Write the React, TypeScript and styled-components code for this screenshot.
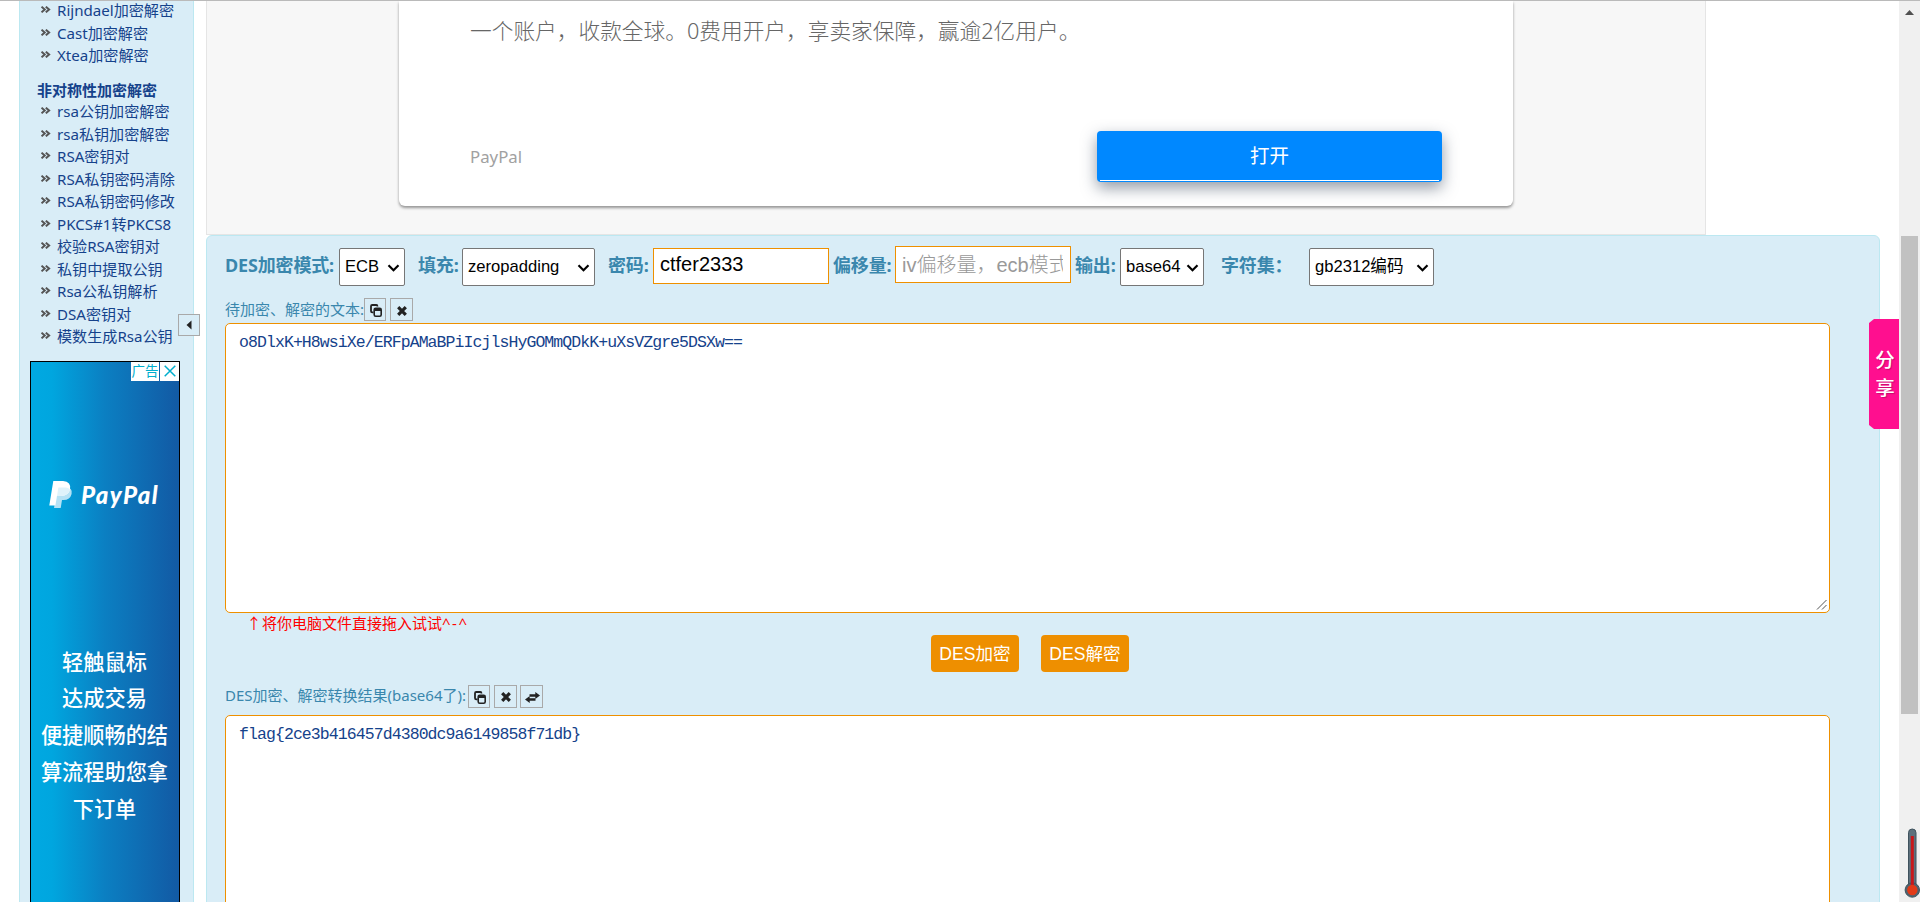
import React from 'react';
import styled, { createGlobalStyle } from 'styled-components';

const GlobalStyle = createGlobalStyle`
  * {
    box-sizing: border-box;
  }

  body {
    margin: 0;
    overflow: hidden;
    background: #fff;
    font-family: 'Noto Sans', 'Noto Sans CJK SC', sans-serif;
    font-size: 15px;
  }
`;

const Page = styled.div`
  position: relative;
  display: flex;
  width: 1920px;
  height: 902px;
  overflow: hidden;
  border-top: 1px solid #bababa;
`;

const Sidebar = styled.aside`
  width: 175px;
  height: 901px;
  margin-left: 19px;
  padding-left: 10px;
  flex-shrink: 0;
  background: #d9edf7;
  border: 1px solid #bce8f1;
  border-width: 0 1px;
`;

const MenuList = styled.ul`
  list-style: none;
  margin: -2px 0 0;
  padding: 0;
`;

const MenuItem = styled.li`
  display: flex;
  align-items: center;
  height: 22.5px;
  padding-left: 11px;
  white-space: nowrap;

  svg {
    flex-shrink: 0;
    margin: -1px 6px 0 0;
  }
`;

const MenuLink = styled.a`
  color: #15428b;
  font-size: 15.1px;
  line-height: 22px;
`;

const MenuTitle = styled.div`
  height: 22.5px;
  margin-top: 12px;
  padding-left: 7px;
  color: #15428b;
  font-weight: bold;
  line-height: 22px;

  & + ${MenuList} {
    margin-top: -1px;
  }
`;

const SideAd = styled.div`
  width: 150px;
  height: 600px;
  margin-top: 13px;
  border: 1px solid #000;
  background: linear-gradient(90deg, #00a9e2 0%, #00a6df 14%, #0b7fc2 50%, #125ba5 98%);
  color: #fff;
`;

const AdMarks = styled.div`
  display: flex;
  justify-content: flex-end;
  gap: 1px;
  height: 19px;
`;

const AdMark = styled.span<{ $width: number }>`
  display: flex;
  align-items: center;
  justify-content: center;
  width: ${(props) => props.$width}px;
  background: #fff;
  color: #00aecd;
  font-size: 13.5px;
  line-height: 19px;
`;

const SideLogo = styled.div`
  display: flex;
  align-items: center;
  height: 30px;
  margin-top: 99px;
  padding-left: 18px;
`;

const SideLogoText = styled.span`
  margin-left: 8px;
  font-family: Lato, sans-serif;
  font-size: 24px;
  font-style: italic;
  font-weight: 900;
  letter-spacing: 1.4px;
  line-height: 30px;
`;

const SideSlogan = styled.div`
  margin-top: 134px;
  margin-left: -1px;
  font-size: 21.2px;
  font-weight: 500;
  line-height: 36.8px;
  text-align: center;
`;

const Main = styled.main`
  width: 1674px;
  margin-left: 12px;
  flex-shrink: 0;
`;

const AdFrame = styled.div`
  width: 1500px;
  height: 234px;
  padding-left: 192px;
  background: #f7f7f7;
  border: 1px solid #e5e5e5;
  border-top: 0;
`;

const AdCard = styled.div`
  width: 1114px;
  height: 205px;
  padding: 14px 71px 0 71px;
  background: #fff;
  border-radius: 0 0 6px 6px;
  box-shadow: 0 2px 3px rgba(0, 0, 0, 0.4);
`;

const AdText = styled.div`
  height: 116px;
  color: #666;
  font-size: 21.7px;
  font-weight: 300;
  line-height: 31px;
`;

const AdFooter = styled.div`
  display: flex;
  align-items: center;
  justify-content: space-between;
`;

const AdBrand = styled.span`
  color: #a1a1a1;
  font-size: 16.8px;
`;

const OpenButton = styled.button`
  display: flex;
  flex-direction: column;
  justify-content: space-between;
  width: 345px;
  height: 51px;
  padding: 0 0 1px;
  border: 0;
  border-radius: 4px;
  background: #0088ff;
  box-shadow: 0 6px 15px rgba(40, 55, 80, 0.5);
  color: #fff;
  font-family: inherit;
  font-size: 19.5px;
  line-height: 49px;

  &::after {
    content: '';
    align-self: stretch;
    height: 1px;
    margin: 0 3px;
    background: #fff;
  }

  span {
    align-self: center;
    height: 49px;
  }
`;

const Panel = styled.section`
  height: 680px;
  padding: 0 49px 0 18px;
  background: #d9edf7;
  border: 1px solid #bce8f1;
  border-radius: 6px;
`;

const Controls = styled.div`
  display: flex;
  height: 62px;
  padding-top: 12px;
`;

const Label = styled.label<{ $width: number; $gap?: number }>`
  width: ${(props) => props.$width}px;
  margin-left: ${(props) => props.$gap || 0}px;
  flex-shrink: 0;
  color: #3a87ad;
  font-size: 18px;
  font-weight: bold;
  line-height: 34px;
  white-space: nowrap;
  letter-spacing: -0.15px;
`;

const SelectBox = styled.span<{ $width: number }>`
  display: grid;
  align-items: center;
  width: ${(props) => props.$width}px;
  height: 38px;
  flex-shrink: 0;

  & > * {
    grid-area: 1 / 1;
  }

  svg {
    justify-self: end;
    margin: 2px 5px 0 0;
    pointer-events: none;
  }
`;

const NativeSelect = styled.select`
  width: 100%;
  height: 38px;
  padding: 0 0 2px 5px;
  appearance: none;
  border: 1px solid #767676;
  border-radius: 2px;
  background: #fff;
  color: #000;
  font-family: 'Liberation Sans', 'Noto Sans CJK SC', sans-serif;
  font-size: 16.6px;
`;

const TextInput = styled.input<{ $raised?: boolean }>`
  width: 176px;
  height: ${(props) => (props.$raised ? 37 : 36)}px;
  margin-top: ${(props) => (props.$raised ? -2 : 0)}px;
  padding: ${(props) => (props.$raised ? '1px 7px 0 6px' : '0 7px 3px 6px')};
  flex-shrink: 0;
  border: 1px solid #ee9000;
  outline: 0;
  background: #fff;
  color: #000;
  font-family: 'Liberation Sans', 'Noto Sans CJK SC', sans-serif;
  font-size: 20px;

  &::placeholder {
    color: #999;
    font-weight: 300;
  }
`;

const FieldHead = styled.div<{ $width: number }>`
  display: flex;
  align-items: center;
  gap: 4px;
  height: 23px;
  color: #3a87ad;

  span {
    width: ${(props) => props.$width}px;
    margin-right: -4px;
    line-height: 20px;
    margin-top: -2px;
    white-space: nowrap;
  }
`;

const IconButton = styled.button`
  display: flex;
  align-items: center;
  justify-content: center;
  width: 22px;
  height: 23px;
  padding: 2px 0 0 1px;
  border: 1px solid #a9a9a9;
  background: #d9edf7;

  & + & {
    width: 23px;
    margin-right: -1px;
  }
`;

const TextArea = styled.textarea<{ $gap: number }>`
  display: block;
  width: 1605px;
  height: 290px;
  margin-top: ${(props) => props.$gap}px;
  padding: 8px 13px;
  border: 1px solid #ee9000;
  border-radius: 5px;
  outline: 0;
  background: #fff;
  color: #15428b;
  font-family: 'Liberation Mono', monospace;
  font-size: 16.5px;
  letter-spacing: -0.92px;
  line-height: 22px;

  &::-webkit-resizer {
    background: url("data:image/svg+xml,%3Csvg xmlns='http://www.w3.org/2000/svg' width='15' height='15' stroke='%23555'%3E%3Cpath d='M3 12.5L12.5 3M8 12.5L12.5 8'/%3E%3C/svg%3E")
      no-repeat right bottom;
  }
`;

const Hint = styled.div`
  height: 22px;
  padding-left: 21px;
  color: #f00;
  line-height: 21px;

  i {
    display: inline-block;
    width: 16px;
    font-style: normal;
    text-align: center;
  }

  b {
    font-weight: normal;
    letter-spacing: 1.5px;
  }
`;

const Actions = styled.div`
  display: flex;
  gap: 22px;
  height: 49.5px;
  padding-left: 706px;
`;

const ActionButton = styled.button`
  width: 88px;
  height: 37px;
  padding: 0;
  border: 0;
  border-radius: 4px;
  background: #ee8f00;
  color: #fff;
  font-family: 'Liberation Sans', 'Noto Sans CJK SC', sans-serif;
  font-size: 17.6px;
  line-height: 34px;
`;

const ToggleButton = styled.button`
  position: absolute;
  left: 178px;
  top: 313px;
  width: 22px;
  height: 22px;
  padding: 0;
  border: 1px solid #a9a9a9;
  background: #d9edf7;
  line-height: 0;
`;

const ShareTab = styled.div`
  position: absolute;
  left: 1869px;
  top: 318px;
  width: 30px;
  height: 110px;
  padding: 27px 0 0 2px;
  background: #ff0f8f;
  clip-path: polygon(5px 0, 100% 0, 100% 100%, 5px 100%, 0 106px, 0 4px);
  color: #fff;
  font-size: 19.5px;
  font-weight: 500;
  line-height: 28px;
  text-align: center;
  text-shadow: 1px 1px 1px rgba(120, 0, 60, 0.4);
`;

const Scrollbar = styled.div`
  width: 21px;
  height: 901px;
  margin-left: 19px;
  flex-shrink: 0;
  background: #f0f0f0;
  padding: 9px 2px 0;

  svg {
    display: block;
    margin: 0 auto;
  }
`;

const ScrollThumb = styled.div`
  height: 478px;
  margin-top: 221px;
  background: #c1c1c1;
`;

const Thermometer = styled.svg`
  position: absolute;
  left: 1904px;
  top: 826px;
`;

const ArrowIcon = () => (
  <svg width="10" height="7" viewBox="0 0 10 7" fill="none" stroke="#555" strokeWidth="2">
    <path d="M0.5 0.7L3.7 3.5L0.5 6.3M4.8 0.7L8.1 3.5L4.8 6.3" />
  </svg>
);

const CopyIcon = () => (
  <svg width="12" height="13" viewBox="0 0 12 13" fill="none" stroke="#222">
    <path d="M3.5 8.3H2.2Q1 8.3 1 7V2.2Q1 1 2.2 1H6.3Q7.5 1 7.5 2.5" strokeWidth="1.8" />
    <rect x="4.2" y="4.2" width="7" height="8" rx="1.5" strokeWidth="1.6" />
    <path d="M4.5 5.5H11" strokeWidth="3" />
  </svg>
);

const ClearIcon = () => (
  <svg width="10" height="10" viewBox="0 0 10 10" stroke="#222" strokeWidth="3.2">
    <path d="M1.2 1.2L8.8 8.8M8.8 1.2L1.2 8.8" />
  </svg>
);

const SwapIcon = () => (
  <svg width="15" height="11" viewBox="0 0 15 11" fill="#222">
    <path d="M10.3 0L15 3.5L10.3 7V4.7H4.5V2.3H10.3ZM4.7 4L0 7.5L4.7 11V8.7H10.5V6.3H4.7Z" />
  </svg>
);

const PayPalIcon = () => (
  <svg width="24" height="29" viewBox="0 0 24 29">
    <path d="M9 7H17Q24 8 22.6 14Q21 20 14.5 20H13L11.7 28H5Z" fill="#b5e2f5" />
    <path d="M4.3 1H14Q22.5 1.5 21 9.5Q19.5 16 12 16H8L6.4 25.5H0.3Z" fill="#fff" />
    <path d="M9.4 7.5H17Q20 8 21 9.5Q19.5 16 12 16H8Z" fill="#dff3fb" />
  </svg>
);

const symmetricLinks = ['Rijndael加密解密', 'Cast加密解密', 'Xtea加密解密'];

const asymmetricLinks = [
  'rsa公钥加密解密',
  'rsa私钥加密解密',
  'RSA密钥对',
  'RSA私钥密码清除',
  'RSA私钥密码修改',
  'PKCS#1转PKCS8',
  '校验RSA密钥对',
  '私钥中提取公钥',
  'Rsa公私钥解析',
  'DSA密钥对',
  '模数生成Rsa公钥',
];

const slogan = ['轻触鼠标', '达成交易', '便捷顺畅的结', '算流程助您拿', '下订单'];

const Menu: React.FC<{ items: string[] }> = ({ items }) => (
  <MenuList>
    {items.map((item) => (
      <MenuItem key={item}>
        <ArrowIcon />
        <MenuLink>{item}</MenuLink>
      </MenuItem>
    ))}
  </MenuList>
);

const Select: React.FC<{ width: number; value: string }> = ({ width, value }) => (
  <SelectBox $width={width}>
    <NativeSelect>
      <option>{value}</option>
    </NativeSelect>
    <svg width="13" height="8" viewBox="0 0 13 8" fill="none" stroke="#000" strokeWidth="2.2">
      <path d="M1.5 1.2L6.5 6.2L11.5 1.2" />
    </svg>
  </SelectBox>
);

const App: React.FC = () => {
  return (
    <Page>
      <GlobalStyle />
      <Sidebar>
        <Menu items={symmetricLinks} />
        <MenuTitle>非对称性加密解密</MenuTitle>
        <Menu items={asymmetricLinks} />
        <SideAd>
          <AdMarks>
            <AdMark $width={28}>广告</AdMark>
            <AdMark $width={19}>
              <svg width="12" height="12" viewBox="0 0 12 12" stroke="#00aecd" strokeWidth="1.5">
                <path d="M0.7 0.7L11.3 11.3M11.3 0.7L0.7 11.3" />
              </svg>
            </AdMark>
          </AdMarks>
          <SideLogo>
            <PayPalIcon />
            <SideLogoText>PayPal</SideLogoText>
          </SideLogo>
          <SideSlogan>
            {slogan.map((line) => (
              <div key={line}>{line}</div>
            ))}
          </SideSlogan>
        </SideAd>
      </Sidebar>

      <Main>
        <AdFrame>
          <AdCard>
            <AdText>一个账户，收款全球。0费用开户，享卖家保障，赢逾2亿用户。</AdText>
            <AdFooter>
              <AdBrand>PayPal</AdBrand>
              <OpenButton>
                <span>打开</span>
              </OpenButton>
            </AdFooter>
          </AdCard>
        </AdFrame>

        <Panel>
          <Controls>
            <Label $width={114}>DES加密模式:</Label>
            <Select width={66} value="ECB" />
            <Label $width={44} $gap={13}>
              填充:
            </Label>
            <Select width={133} value="zeropadding" />
            <Label $width={45} $gap={13}>
              密码:
            </Label>
            <TextInput defaultValue="ctfer2333" />
            <Label $width={62} $gap={4}>
              偏移量:
            </Label>
            <TextInput $raised placeholder="iv偏移量，ecb模式不用填写" />
            <Label $width={45} $gap={4}>
              输出:
            </Label>
            <Select width={84} value="base64" />
            <Label $width={88} $gap={17}>
              字符集：
            </Label>
            <Select width={125} value="gb2312编码" />
          </Controls>

          <FieldHead $width={139}>
            <span>待加密、解密的文本:</span>
            <IconButton>
              <CopyIcon />
            </IconButton>
            <IconButton>
              <ClearIcon />
            </IconButton>
          </FieldHead>
          <TextArea
            $gap={2}
            spellCheck={false}
            defaultValue="o8DlxK+H8wsiXe/ERFpAMaBPiIcjlsHyGOMmQDkK+uXsVZgre5DSXw=="
          />
          <Hint>
            <i>↑</i>将你电脑文件直接拖入试试<b>^-^</b>
          </Hint>
          <Actions>
            <ActionButton>DES加密</ActionButton>
            <ActionButton>DES解密</ActionButton>
          </Actions>
          <FieldHead $width={243}>
            <span>DES加密、解密转换结果(base64了):</span>
            <IconButton>
              <CopyIcon />
            </IconButton>
            <IconButton>
              <ClearIcon />
            </IconButton>
            <IconButton>
              <SwapIcon />
            </IconButton>
          </FieldHead>
          <TextArea
            $gap={7.5}
            spellCheck={false}
            defaultValue="flag{2ce3b416457d4380dc9a6149858f71db}"
          />
        </Panel>
      </Main>

      <Scrollbar>
        <svg width="9" height="5" viewBox="0 0 9 5" fill="#505050">
          <path d="M4.5 0L9 5H0Z" />
        </svg>
        <ScrollThumb />
      </Scrollbar>

      <ToggleButton>
        <svg width="6" height="10" viewBox="0 0 6 10" fill="#222">
          <path d="M5.5 0.5V9.5L0.5 5Z" />
        </svg>
      </ToggleButton>
      <ShareTab>
        <div>分</div>
        <div>享</div>
      </ShareTab>
      <Thermometer width="16" height="72" viewBox="0 0 16 72">
        <rect x="4.5" y="2" width="7.5" height="62" rx="3.7" fill="#5d707c" stroke="#3f525d" />
        <circle cx="8.3" cy="63" r="7.2" fill="#4f636f" stroke="#3f525d" />
        <path d="M8.3 9V60" stroke="#c8171a" strokeWidth="3" />
        <circle cx="8.3" cy="63" r="5.2" fill="#e23a17" />
      </Thermometer>
    </Page>
  );
};

export default App;
